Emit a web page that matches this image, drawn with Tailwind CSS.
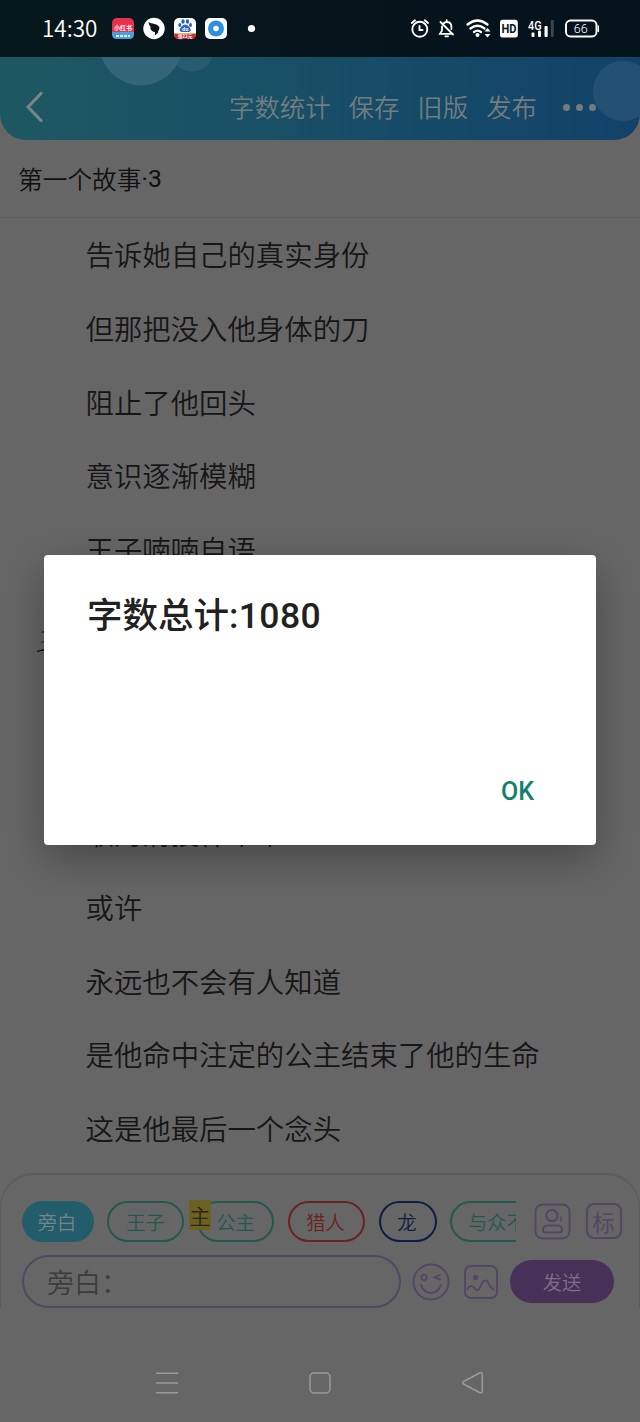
<!DOCTYPE html>
<html lang="zh-CN">
  <head>
    <meta charset="UTF-8" />
    <meta name="viewport" content="width=device-width, initial-scale=1.0" />
    <title>第一个故事·3</title>
    <script src="https://cdn.jsdelivr.net/npm/@tailwindcss/browser@4"></script>
  </head>
  <body
    class="relative flex h-[1422px] w-[640px] flex-col overflow-hidden bg-[#666] font-['Noto_Sans_CJK_SC',sans-serif] font-[350] text-[#161616]"
  >
    <!-- status bar -->
    <div
      class="relative flex h-[57px] shrink-0 items-center bg-linear-to-r from-[#07181c] to-[#04121b] pl-[42px] text-white"
    >
      <span
        class="w-[70px] pb-[2px] text-[22.500px] leading-none whitespace-nowrap"
        >14:30</span
      >
      <svg class="h-[57px] w-[528px] shrink-0" viewBox="112 0 528 57">
        <!-- red app -->
        <rect x="112" y="18" width="22" height="21" rx="5" fill="#e8304f" />
        <path d="M112 32h22v2q0 5-5 5h-12q-5 0-5-5z" fill="#4b9fe0" />
        <text x="123" y="29.500" font-size="6" font-weight="700" text-anchor="middle" fill="#fff">小红书</text>
        <path d="M116 36h14" stroke="#d9edff" stroke-width="2" stroke-dasharray="3 1" />
        <!-- bird -->
        <circle cx="154" cy="28.500" r="10.700" fill="#fff" />
        <path d="M148.500 22c3.500 2 8 1.500 10.500 4.500 1 1.500 0 3.500-1 5l.3 1-3.500 3 .3-3.200c-3.500-1-4.600-3-5.300-4.800l1.500.3c-1.500-1.500-2.500-3.500-2.800-5.800z" fill="#0b1115" />
        <!-- paw -->
        <rect x="174" y="18" width="22" height="21" rx="5" fill="#fff" />
        <path d="M174 33.500h22v.5q0 5-5 5h-12q-5 0-5-5z" fill="#c5303c" />
        <path d="M174.500 33.500h21" stroke="#f0b64a" />
        <g fill="#2f62c8">
          <ellipse cx="183" cy="21.500" rx="1.700" ry="2.200" />
          <ellipse cx="187.500" cy="21.500" rx="1.700" ry="2.200" />
          <ellipse cx="179.800" cy="25" rx="1.500" ry="2" />
          <ellipse cx="190.500" cy="25" rx="1.500" ry="2" />
          <path d="M185.200 24.500c2.500 0 5.500 3.500 5.500 5.500s-2 2-5.500 2-5.500 0-5.500-2 3-5.500 5.500-5.500z" />
        </g>
        <text x="185.200" y="31" font-size="5" font-weight="700" text-anchor="middle" fill="#fff">du</text>
        <text x="185" y="38" font-size="4.500" font-weight="700" text-anchor="middle" fill="#fff">领22元</text>
        <!-- blue disc -->
        <rect x="205" y="18" width="22" height="21" rx="5" fill="#fff" />
        <circle cx="216" cy="28.500" r="8" fill="#2d8fdc" />
        <circle cx="216" cy="28.500" r="2.800" fill="#fff" />
        <circle cx="251.500" cy="28.500" r="3.600" fill="#fff" />

        <g fill="none" stroke="#fff" stroke-width="1.900" stroke-linecap="round">
          <!-- alarm -->
          <circle cx="419.800" cy="29.300" r="7.500" />
          <path d="M419.500 26v4h3M411.800 23l3.200-2.700M428 23l-3.200-2.700" />
          <!-- muted bell -->
          <path d="M443.500 23.500c1-1 2-1.500 3.200-1.500 3 0 4.700 2.200 4.700 5v2M442 26.500v4l-2 3.300h11.500M446.700 21v-.8M445.300 36.300h2.800M440.500 22l12.500 12.500" stroke-width="1.800" />
          <!-- wifi -->
          <path d="M467.500 24.500q10-8 20 0M470.500 28.500q7-5.500 14 0M474 32q3.500-2.800 7 0" stroke-width="2.300" />
        </g>
        <circle cx="477.500" cy="35" r="2" fill="#fff" />
        <path d="M487.500 28l3 3.400h-6zM487.500 37.500l3-3.400h-6z" fill="#fff" />
        <rect x="500" y="19.800" width="17.800" height="17.700" rx="2.500" fill="#fff" />
        <text x="501.500" y="33" font-family="Roboto" font-size="12.500" font-weight="700" textLength="15" lengthAdjust="spacingAndGlyphs" fill="#07151c">HD</text>
        <text x="528" y="29.500" font-family="Roboto" font-size="12" font-weight="500" textLength="13.500" lengthAdjust="spacingAndGlyphs" fill="#fff">4G</text>
        <g fill="#fff">
          <rect x="531.500" y="32.500" width="3" height="4.500" rx="1" />
          <rect x="538" y="30.500" width="3" height="6.500" rx="1" />
          <rect x="544.500" y="26" width="3.200" height="11" rx="1" />
          <rect x="550.800" y="20" width="3" height="17" rx="1" fill="#3a454d" />
        </g>
        <rect x="566" y="20.500" width="30.500" height="16" rx="4.500" fill="none" stroke="#fff" stroke-width="1.900" />
        <path d="M598.300 26v5.500" stroke="#fff" stroke-width="1.500" stroke-linecap="round" />
        <text x="580.800" y="33" font-family="Roboto" font-size="12.500" text-anchor="middle" fill="#fff">66</text>
      </svg>
    </div>

    <!-- toolbar -->
    <header
      class="relative h-[83px] shrink-0 overflow-hidden rounded-b-[26px] bg-linear-to-r from-[#1d5862] via-[#174e66] to-[#124269]"
    >
      <svg class="absolute inset-0 h-[83px] w-[640px]" viewBox="0 57 640 83">
        <circle cx="192" cy="50" r="21.500" fill="#fff" fill-opacity=".06" />
        <circle cx="141" cy="44" r="41.500" fill="#316577" />
        <circle cx="623" cy="91" r="30" fill="#fff" fill-opacity=".07" />
      </svg>
      <div class="relative flex h-full items-center pt-[17px] pl-[26px] text-[25.400px] leading-none text-[#737c80]">
        <svg class="h-8 w-5 shrink-0" viewBox="0 0 20 32" fill="none" stroke="#7b8589" stroke-width="3.200" stroke-linecap="round" stroke-linejoin="round">
          <path d="M15 2.500L2 16l13 13.500" />
        </svg>
        <nav class="flex items-center gap-[18px] pl-[183px]">
          <span>字数统计</span>
          <span>保存</span>
          <span>旧版</span>
          <span>发布</span>
        </nav>
        <div class="flex gap-[6px] pt-px pl-[26px]">
          <i class="size-[7px] rounded-full bg-[#737c80]"></i>
          <i class="size-[7px] rounded-full bg-[#737c80]"></i>
          <i class="size-[7px] rounded-full bg-[#737c80]"></i>
        </div>
      </div>
    </header>

    <div class="flex h-[78px] shrink-0 items-center border-b border-[#5e5e5e] pl-[18px] text-[24.700px] text-[#101010]">
      第一个故事<span class="font-['Roboto'] font-normal">·3</span>
    </div>

    <!-- story lines -->
    <main class="h-[955px] shrink-0 pl-[85.500px] text-[28.400px] leading-[73.800px]">
      <div class="-mt-px">
        <p>告诉她自己的真实身份</p>
        <p>但那把没入他身体的刀</p>
        <p>阻止了他回头</p>
        <p>意识逐渐模糊</p>
        <p>王子喃喃自语</p>
        <svg class="-ml-[49px] h-[210px] w-[49px]" viewBox="36.500 586 49 210" fill="#080808">
          <path d="M40.500 632.500l8-4v4zM39.500 642.500q5-1 9-4.500v4zM36 651q6-1 12-4v4q-6-1-11 1z" />
        </svg>
        <p>取对清授什个个</p>
        <p>或许</p>
        <p>永远也不会有人知道</p>
        <p>是他命中注定的公主结束了他的生命</p>
        <p>这是他最后一个念头</p>
      </div>
    </main>

    <!-- composer -->
    <footer class="flex h-[135px] shrink-0 flex-col rounded-t-[34px] border-x border-t-2 border-[#5c5c5f] pl-[21px]">
      <div class="flex h-[80px] items-center pt-[12px]">
        <div class="flex w-[494px] shrink-0 items-center overflow-hidden text-[19.300px] leading-none whitespace-nowrap">
          <span class="flex h-[41px] w-[72px] shrink-0 items-center justify-center rounded-full bg-[#235c6b] pt-[3px] pr-[2px] text-[#76868b]">旁白</span>
          <span class="ml-[13px] flex h-[41px] w-[77px] shrink-0 items-center justify-center rounded-full border-2 border-[#22594f] pt-[3px] text-[#22594f]">王子</span>
          <span class="ml-[13px] flex h-[41px] w-[77px] shrink-0 items-center justify-center rounded-full border-2 border-[#22594f] pt-[3px] text-[#22594f]">公主</span>
          <span class="ml-[14px] flex h-[41px] w-[77px] shrink-0 items-center justify-center rounded-full border-2 border-[#6b2222] pt-[3px] pr-[2px] text-[#6b2222]">猎人</span>
          <span class="ml-[14px] flex h-[41px] w-[58px] shrink-0 items-center justify-center rounded-full border-2 border-[#0e1e42] pt-[3px] pr-[2px] text-[#0e1e42]">龙</span>
          <span class="ml-[13px] flex h-[41px] w-[140px] shrink-0 items-center rounded-full border-2 border-[#22594f] pt-[3px] pl-[16px] text-[#22594f]">与众不同</span>
        </div>
        <svg class="ml-[17.500px] size-[37px] shrink-0" viewBox="0 0 37 37" fill="none" stroke="#544763" stroke-width="1.900">
          <rect x="1.500" y="1.500" width="34" height="34" rx="7" />
          <circle cx="18" cy="12.500" r="5.700" />
          <path d="M20 7q1 3 4 5M27 13.500v5" stroke-width="1.500" />
          <path d="M14 22.500h9q5 0 5 4.500 0 2.500-2.500 2.500h-14q-2.500 0-2.500-2.500 0-4.500 5-4.500z" />
        </svg>
        <div class="ml-[15px] flex size-[36px] shrink-0 items-center justify-center rounded-[8px] border-2 border-[#544763] text-[22.500px] leading-none font-normal text-[#544763]">标</div>
      </div>
      <div class="flex h-[53px] items-center">
        <div class="flex h-[53px] w-[379px] shrink-0 items-center rounded-full border-2 border-[#544763] pt-[2px] pl-[23px] text-[27px] text-[#3c3c3c]">旁白：</div>
        <svg class="ml-[11px] size-[38px] shrink-0" viewBox="0 0 38 38" fill="none" stroke="#544763" stroke-width="1.900" stroke-linecap="round">
          <circle cx="19" cy="19" r="17.500" />
          <circle cx="12" cy="14.500" r="2.700" />
          <path d="M28 12l-5.500 2.500 5.500 2M9 22q3 8 10 8t10-8" />
        </svg>
        <svg class="ml-[13px] size-[36px] shrink-0" viewBox="0 0 36 36" fill="none" stroke="#544763" stroke-width="1.900" stroke-linecap="round">
          <rect x="2" y="2" width="32" height="32" rx="6" />
          <circle cx="12.500" cy="13.500" r="2.700" fill="#544763" stroke="none" />
          <path d="M4.500 25c2-4 5-4 7-1s4 3 6-1.500c2.500-6.500 6-8 8-3 1.500 4 3 4.500 5 6" />
        </svg>
        <div class="ml-[11px] flex h-[43px] w-[104px] shrink-0 items-center justify-center rounded-full bg-[#473158] pt-[2px] text-[19.300px] leading-none text-[#7c6f86]">发送</div>
      </div>
    </footer>

    <!-- system navigation -->
    <div class="flex h-[114px] shrink-0 items-center pt-[36px] pl-[155px]">
      <svg class="h-[24px] w-[330px]" viewBox="155 1371 330 24" fill="none" stroke="#9a9a9a" stroke-width="1.500" stroke-linecap="round" stroke-linejoin="round">
        <path d="M156.500 1373.200h21M156.500 1383h21M156.500 1392.700h21" />
        <rect x="310" y="1373" width="20" height="20" rx="4" />
        <path d="M463.500 1381.500l16-8.500q2.800-1 2.800 1.500v16.500q0 2.500-2.800 1.500l-16-8.500q-1.500-1.300 0-2.500z" />
      </svg>
    </div>

    <!-- mention marker -->
    <div class="absolute top-[1200px] left-[189px] flex h-[30px] w-[22px] items-center justify-center bg-[#6b6222] text-[21px] leading-none text-[#2a2714]">主</div>

    <!-- word count dialog -->
    <div
      class="absolute top-[555px] left-[44px] flex h-[290px] w-[552px] flex-col justify-between rounded-[4px] bg-white pt-[33px] pr-[62px] pb-[36px] pl-[43px] shadow-[0_14px_40px_rgba(0,0,0,0.3)]"
    >
      <h1 class="text-[35.500px] leading-[50px] font-medium text-[#212121]">
        字数总计<span class="font-['Roboto'] tracking-[0.400px]">:1080</span>
      </h1>
      <button class="self-end font-['Roboto'] text-[25px] leading-[34px] font-medium text-[#0f7f70]">OK</button>
    </div>
  </body>
</html>
